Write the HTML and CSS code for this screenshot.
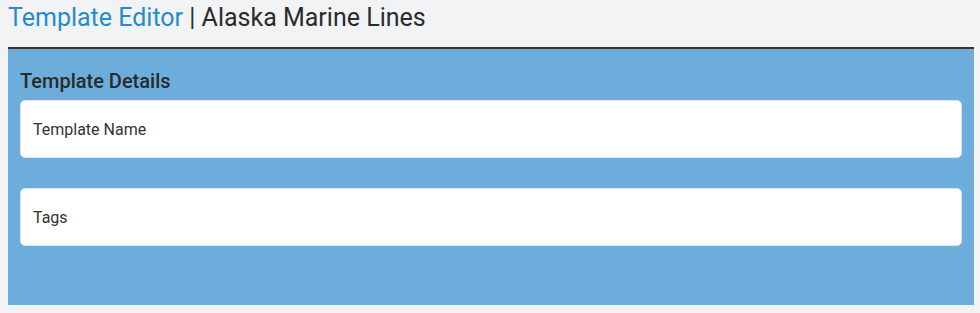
FILE: index.html
```html
<!DOCTYPE html>
<html lang="en">
<head>
    <meta charset="UTF-8">
    <meta name="viewport" content="width=device-width, initial-scale=1.0">
    <title>Template Editor</title>
    <link rel="stylesheet" href="styles.css">
</head>
<body>
    <div class="page-title">
        <span class="crumb">Template Editor</span> | Alaska Marine Lines
    </div>

    <div class="panel">
        <h2>Template Details</h2>
        <div class="field">Template Name</div>
        <div class="field">Tags</div>
    </div>
</body>
</html>
```

FILE: styles.css
```css
* {
    margin: 0;
    padding: 0;
    box-sizing: border-box;
}

body {
    font-family: Roboto, "Liberation Sans", sans-serif;
    background-color: #f2f3f5;
    color: #333;
    padding: 0 6px 0 8px;
}

.page-title {
    font-size: 25px;
    line-height: 35px;
    color: #2b2b2b;
    height: 47px;
}

.page-title .crumb {
    color: #258cc9;
}

.panel {
    background-color: #6daddb;
    border-top: 2px solid #333;
    padding: 20px 12px 59px 12px;
    display: flex;
    flex-direction: column;
    gap: 30px;
}

.panel h2 {
    font-size: 20px;
    font-weight: 500;
    color: #2a2a2a;
    line-height: 24px;
    margin-bottom: -23px;
}

.field {
    background-color: #fff;
    border: 1px solid #dde3ea;
    border-radius: 5px;
    height: 58px;
    padding: 0 12px;
    display: flex;
    align-items: center;
    font-size: 16px;
    color: #333;
}
```
